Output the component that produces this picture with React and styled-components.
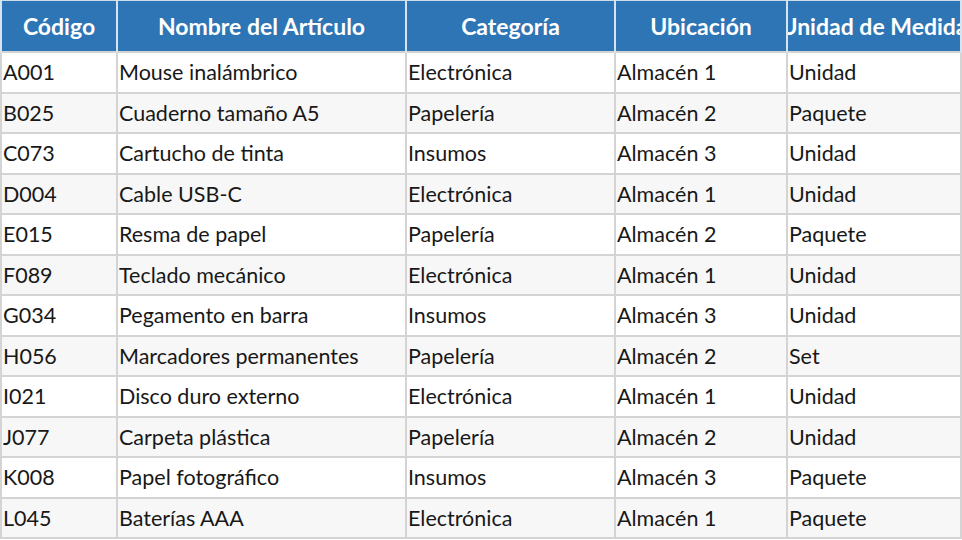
import React from "react";
import styled, { createGlobalStyle } from "styled-components";

const GlobalStyle = createGlobalStyle`
  body {
    margin: 0;
    background: #ffffff;
    font-family: Lato, "Open Sans", sans-serif;
  }
`;

const Wrap = styled.div`
  width: 962px;
  height: 540px;
  overflow: hidden;
`;

const Table = styled.table`
  width: 960px;
  table-layout: fixed;
  border-collapse: collapse;
  font-family: Lato, sans-serif;
`;

const HeadCell = styled.th`
  height: 50px;
  padding: 0;
  background: #2e75b6;
  color: #ffffff;
  font-size: 23px;
  font-weight: 700;
  text-align: center;
  white-space: nowrap;
  overflow: hidden;
  border: 2px solid #d6e3f1;
  border-top: 1px solid #cfdcec;
  border-bottom: 1px solid #2e75b6;
`;

const HeadInner = styled.div`
  display: flex;
  justify-content: center;
  overflow: hidden;
  white-space: nowrap;
`;

const Row = styled.tr`
  background: ${(p) => (p.$alt ? "#f7f7f7" : "#ffffff")};
`;

const Cell = styled.td`
  height: 38.5px;
  padding: 0 1px;
  font-size: 21.5px;
  color: #181818;
  white-space: nowrap;
  overflow: hidden;
  border: 2px solid #d4d4d4;
`;

const columns = [
  { label: "Código", width: 116 },
  { label: "Nombre del Artículo", width: 289 },
  { label: "Categoría", width: 209 },
  { label: "Ubicación", width: 172 },
  { label: "Unidad de Medida", width: 174 },
];

const rows = [
  ["A001", "Mouse inalámbrico", "Electrónica", "Almacén 1", "Unidad"],
  ["B025", "Cuaderno tamaño A5", "Papelería", "Almacén 2", "Paquete"],
  ["C073", "Cartucho de tinta", "Insumos", "Almacén 3", "Unidad"],
  ["D004", "Cable USB-C", "Electrónica", "Almacén 1", "Unidad"],
  ["E015", "Resma de papel", "Papelería", "Almacén 2", "Paquete"],
  ["F089", "Teclado mecánico", "Electrónica", "Almacén 1", "Unidad"],
  ["G034", "Pegamento en barra", "Insumos", "Almacén 3", "Unidad"],
  ["H056", "Marcadores permanentes", "Papelería", "Almacén 2", "Set"],
  ["I021", "Disco duro externo", "Electrónica", "Almacén 1", "Unidad"],
  ["J077", "Carpeta plástica", "Papelería", "Almacén 2", "Unidad"],
  ["K008", "Papel fotográfico", "Insumos", "Almacén 3", "Paquete"],
  ["L045", "Baterías AAA", "Electrónica", "Almacén 1", "Paquete"],
];

export default function App() {
  return (
    <Wrap>
      <GlobalStyle />
      <Table>
        <colgroup>
          {columns.map((c) => (
            <col key={c.label} style={{ width: c.width }} />
          ))}
        </colgroup>
        <thead>
          <tr>
            {columns.map((c) => (
              <HeadCell key={c.label}>
                <HeadInner>{c.label}</HeadInner>
              </HeadCell>
            ))}
          </tr>
        </thead>
        <tbody>
          {rows.map((r, i) => (
            <Row key={r[0]} $alt={i % 2 === 1}>
              {r.map((v, j) => (
                <Cell key={j}>{v}</Cell>
              ))}
            </Row>
          ))}
        </tbody>
      </Table>
    </Wrap>
  );
}
